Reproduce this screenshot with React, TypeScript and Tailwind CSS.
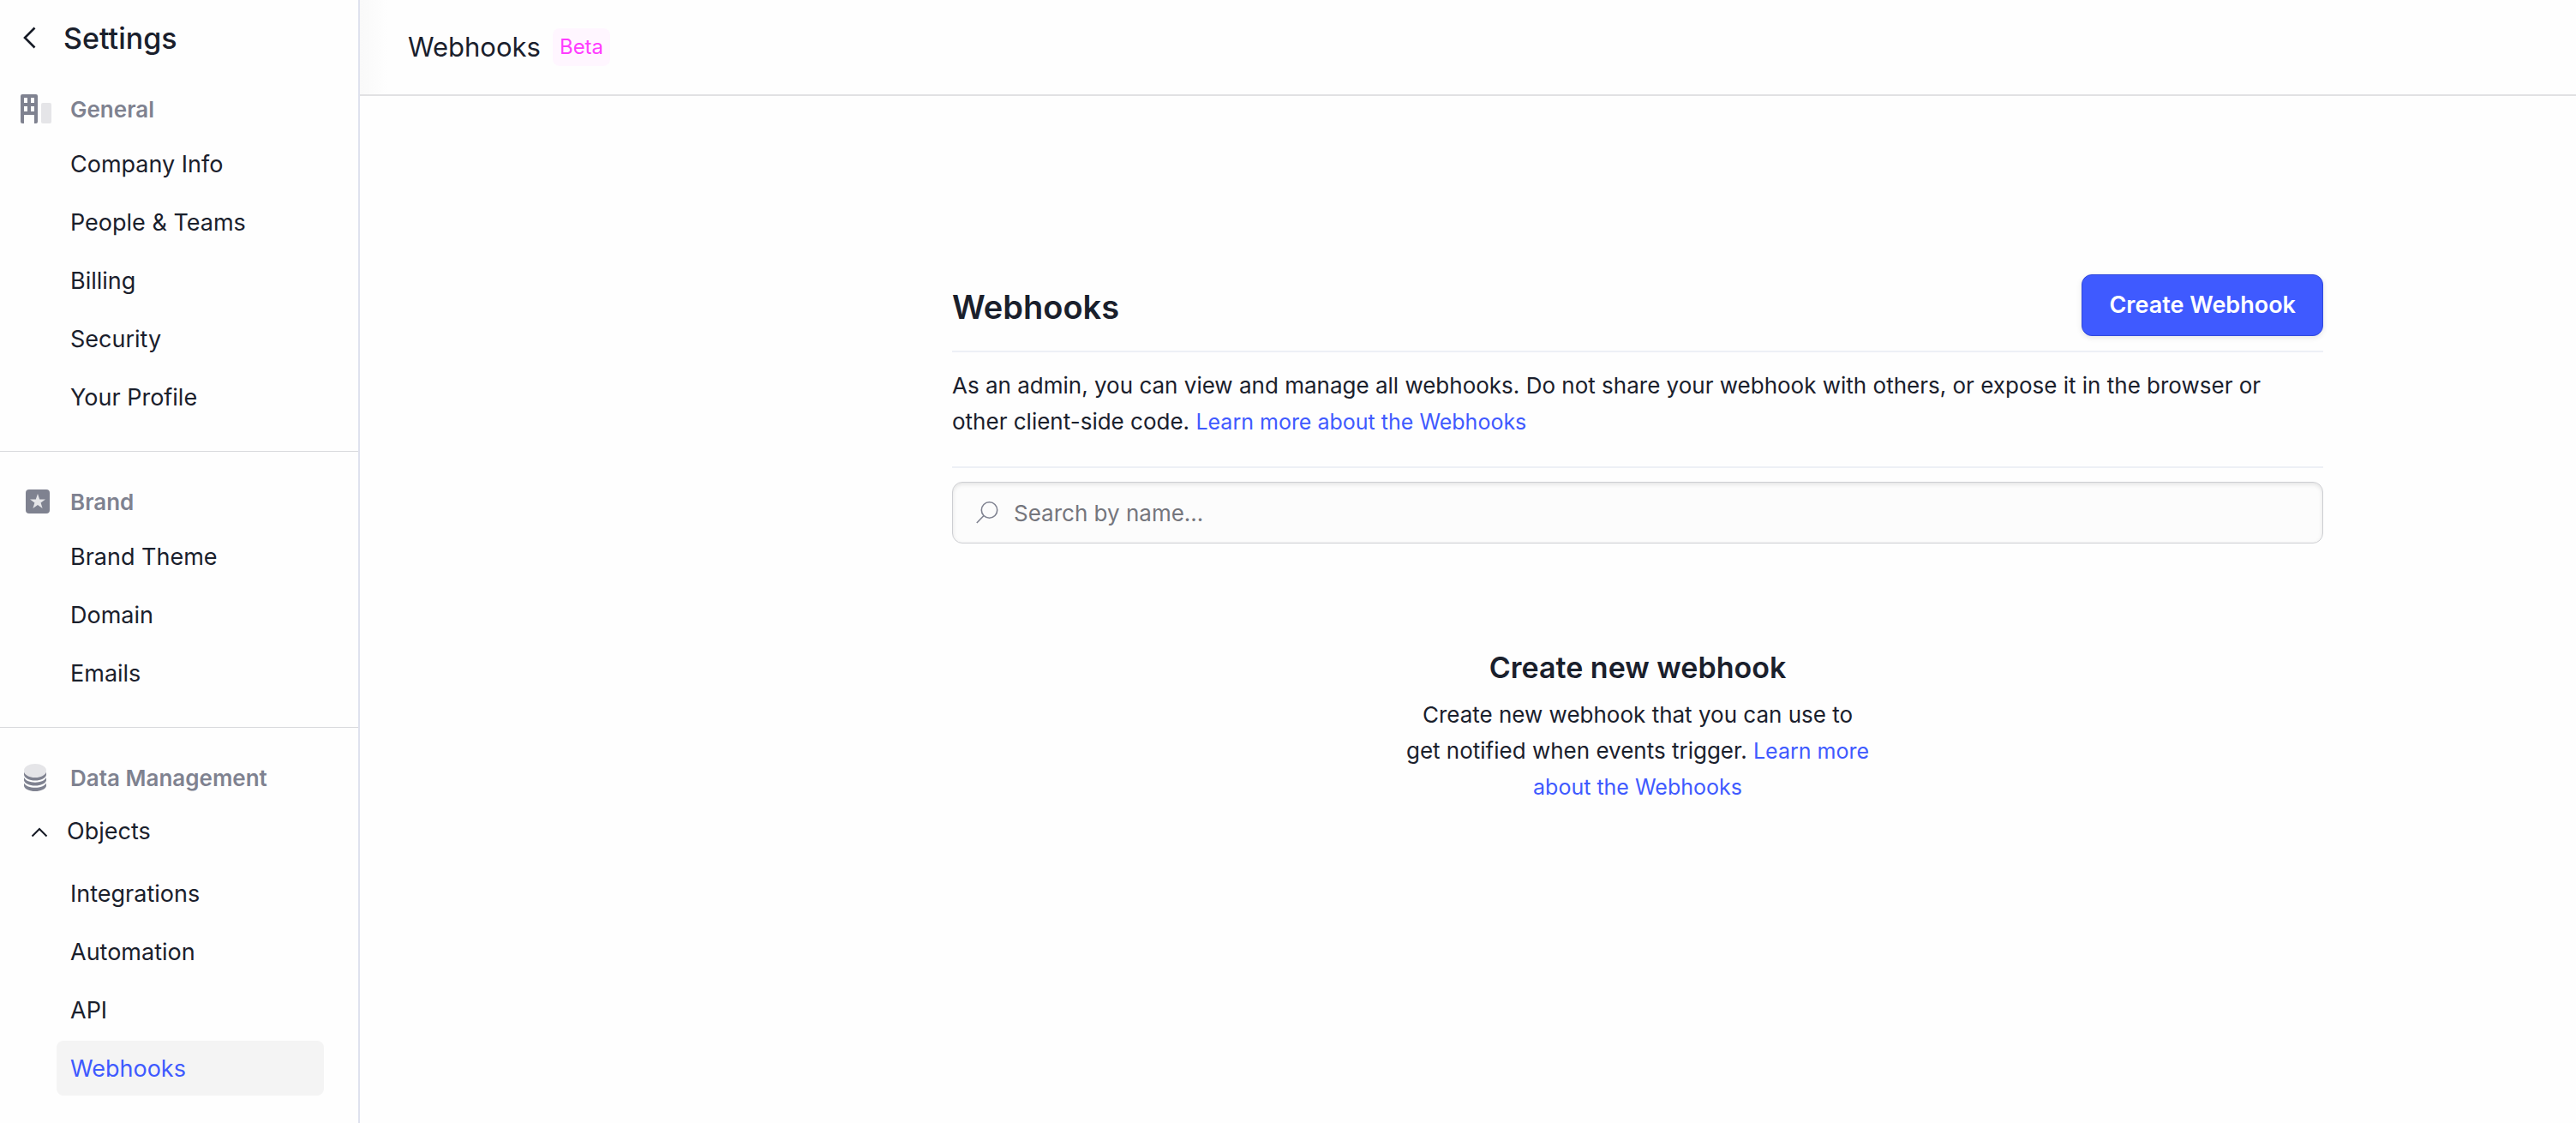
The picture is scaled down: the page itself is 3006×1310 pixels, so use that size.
import type { ReactNode } from "react";

type Item = { label: string; active?: boolean };

const generalItems: Item[] = [
  { label: "Company Info" },
  { label: "People & Teams" },
  { label: "Billing" },
  { label: "Security" },
  { label: "Your Profile" },
];

const brandItems: Item[] = [{ label: "Brand Theme" }, { label: "Domain" }, { label: "Emails" }];

const dataItems: Item[] = [
  { label: "Integrations" },
  { label: "Automation" },
  { label: "API" },
  { label: "Webhooks", active: true },
];

const BuildingIcon = () => (
  <svg width="36" height="34" viewBox="0 0 36 34" aria-hidden="true">
    <path
      fill="#7f8290"
      fillRule="evenodd"
      d="M2 0h16a2 2 0 0 1 2 2v30a2 2 0 0 1-2 2h-2V24H4v10H2a2 2 0 0 1-2-2V2a2 2 0 0 1 2-2Zm2 4v6h4V4H4Zm8 0v6h4V4h-4ZM4 14v6h4v-6H4Zm8 0v6h4v-6h-4Z"
    />
    <rect x="24" y="10" width="12" height="24" rx="2" fill="#e5e5e8" />
  </svg>
);

const StarIcon = () => (
  <svg width="28" height="28" viewBox="0 0 28 28" className="ml-1.5" aria-hidden="true">
    <rect width="28" height="28" rx="4" fill="#7f8290" />
    <path fill="#e5e5e8" d="m14 5 2.2 6.400H23l-5.400 4.100 2 6.500-5.600-3.900L8.400 22l2-6.500L5 11.400h6.800L14 5Z" />
  </svg>
);

const DatabaseIcon = () => (
  <svg width="26" height="32" viewBox="0 0 26 32" className="ml-1" aria-hidden="true">
    <ellipse cx="13" cy="8" rx="13" ry="8" fill="#e5e5e8" />
    <path
      fill="#7f8290"
      d="M0 9.500c1.500 4 6.500 6.500 13 6.500s11.500-2.500 13-6.500v3.500c-1 4-6.300 6.500-13 6.500S1 17 0 13V9.500ZM0 16c2 3.600 7 5.700 13 5.700S24 19.600 26 16v3.500c-1 3.600-6.300 6-13 6s-12-2.400-13-6V16ZM0 22.500c2 3.400 7 5.300 13 5.300s11-1.900 13-5.300V26c-1 3.600-6.300 6-13 6S1 29.600 0 26v-3.500Z"
    />
  </svg>
);

const NavItem = ({ label, active }: Item) => (
  <li>
    <a
      href="#"
      aria-current={active ? "page" : undefined}
      className={
        active
          ? "flex h-16 items-center rounded-lg bg-[#f4f4f4] pt-0.5 pl-4 text-[#3f5aff]"
          : "flex h-16 items-center rounded-lg pt-0.5 pl-4"
      }
    >
      {label}
    </a>
  </li>
);

const NavList = ({ items }: { items: Item[] }) => (
  <ul className="ml-[66px] mr-10 flex flex-col gap-1">
    {items.map((item) => (
      <NavItem key={item.label} {...item} />
    ))}
  </ul>
);

const SectionHeading = ({ icon, children }: { icon: ReactNode; children: ReactNode }) => (
  <div className="mb-0.5 flex h-15 items-center pl-6">
    <span className="w-[58px]">{icon}</span>
    <h2 className="text-[26px] font-semibold text-[#7f8290]">{children}</h2>
  </div>
);

const Sidebar = () => (
  <nav className="w-[420px] shrink-0 border-r-2 border-[#dfe2ee] text-[27px]">
    <div className="mb-[9px] flex h-[88px] items-center pl-6">
      <button type="button" aria-label="Back" className="w-[50px]">
        <svg width="20" height="26" viewBox="0 0 20 26" fill="none" stroke="#161b26" strokeWidth="2.600" aria-hidden="true">
          <path d="M16.500 1.500 5 13l11.500 11.500" />
        </svg>
      </button>
      <h1 className="text-[34px] font-medium">Settings</h1>
    </div>

    <section className="border-b border-[#d8d9dc] pb-[31px]">
      <SectionHeading icon={<BuildingIcon />}>General</SectionHeading>
      <NavList items={generalItems} />
    </section>

    <section className="border-b border-[#d8d9dc] pt-7 pb-[31px]">
      <SectionHeading icon={<StarIcon />}>Brand</SectionHeading>
      <NavList items={brandItems} />
    </section>

    <section className="pt-7 pb-8">
      <SectionHeading icon={<DatabaseIcon />}>Data Management</SectionHeading>
      <button type="button" aria-expanded="true" className="mb-2 flex h-[63px] items-center pl-9">
        <svg width="20" height="12" viewBox="0 0 20 12" fill="none" stroke="#161b26" strokeWidth="2" className="mr-[22px]" aria-hidden="true">
          <path d="m1.500 10.500 8.500-8.500 8.500 8.500" />
        </svg>
        Objects
      </button>
      <NavList items={dataItems} />
    </section>
  </nav>
);

const LearnMore = () => (
  <a href="#" className="text-[25px] text-[#3f5aff]">
    Learn more about the Webhooks
  </a>
);

const App = () => {
  return (
    <div className="flex min-h-screen bg-[#fefefe] font-['Inter','Liberation_Sans',sans-serif] text-[#1a202c]">
      <Sidebar />

      <div className="min-w-0 grow">
        <header className="flex h-28 items-center gap-3.5 border-b-2 border-[#e1e1e3] bg-linear-to-r from-[#f9f9f9] to-[#fefefe] to-[32px] pl-14">
          <span className="text-[31px]">Webhooks</span>
          <span className="rounded-lg bg-[#fff6ff] px-2 py-1 text-[24px] leading-9 text-[#ff3dff]">Beta</span>
        </header>

        <main className="pt-52 pr-10 pl-[436px]">
          <div className="mx-auto max-w-[1600px]">
            <div className="flex items-start justify-between border-b-2 border-[#edf0f6] pb-[17px]">
              <h2 className="pt-3 text-[38px] leading-[52px] font-semibold">Webhooks</h2>
              <button
                type="button"
                className="h-18 rounded-xl border border-[#3049dd] bg-[#3f5aff] px-[31px] text-[27px] font-semibold text-white shadow-[0_2px_6px_rgba(0,0,0,0.1)]"
              >
                Create Webhook
              </button>
            </div>

            <p className="border-b-2 border-[#edf0f6] pt-[18px] pr-10 pb-[31px] text-[26px] leading-[42px]">
              As an admin, you can view and manage all webhooks. Do not share your webhook with others, or expose it in the browser or other client-side code. <LearnMore />
            </p>

            <label className="mt-4 flex h-18 items-center gap-[18px] rounded-xl border border-[#cdced2] bg-[#fcfcfc] px-[27px] inset-shadow-[0_2px_5px_rgba(0,0,0,0.1)]">
              <svg width="26" height="26" viewBox="0 0 26 26" fill="none" stroke="#7f8290" strokeWidth="1.600" aria-hidden="true">
                <circle cx="15.500" cy="10" r="9.200" />
                <path d="M9 16.500.8 25" />
              </svg>
              <input
                type="text"
                aria-label="Search by name"
                placeholder="Search by name..."
                className="grow bg-transparent text-[26px] outline-none placeholder:text-[#75767d]"
              />
            </label>

            <div className="mx-auto mt-[119px] w-[546px] text-center">
              <h3 className="text-[34px] leading-[52px] font-semibold">Create new webhook</h3>
              <p className="mt-2 text-[26px] leading-[42px]">
                Create new webhook that you can use to get notified when events trigger. <LearnMore />
              </p>
            </div>
          </div>
        </main>
      </div>
    </div>
  );
};

export default App;
